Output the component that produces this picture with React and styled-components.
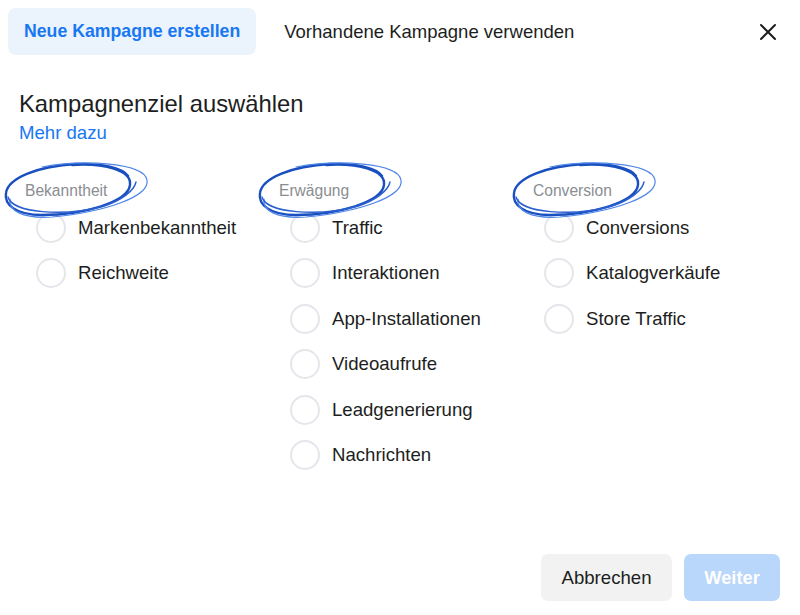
import React from 'react';
import styled, { createGlobalStyle } from 'styled-components';

const GlobalStyle = createGlobalStyle`
    html, body {
        margin: 0;
        padding: 0;
        background: #ffffff;
    }
    body {
        font-family: "Liberation Sans", Arial, sans-serif;
        color: #1c1e21;
    }
`;

const Dialog = styled.div`
    width: 800px;
    height: 615px;
    box-sizing: border-box;
    display: flex;
    flex-direction: column;
    background: #fff;
`;

const TopBar = styled.div`
    display: flex;
    align-items: center;
    padding: 8px 23px 0 8px;
    height: 47px;
`;

const Tab = styled.button`
    border: none;
    font-family: inherit;
    font-size: ${p => (p.$active ? '17.7px' : '18.5px')};
    height: 47px;
    padding: 0 16px;
    border-radius: 8px;
    cursor: pointer;
    font-weight: ${p => (p.$active ? 700 : 400)};
    color: ${p => (p.$active ? '#1877f2' : '#1c1e21')};
    background: ${p => (p.$active ? '#ebf3fc' : 'transparent')};
    margin-right: 12px;
`;

const CloseButton = styled.button`
    margin-left: auto;
    border: none;
    background: transparent;
    padding: 0;
    width: 18px;
    height: 18px;
    display: flex;
    align-items: center;
    justify-content: center;
    cursor: pointer;
`;

const Body = styled.div`
    flex: 1;
    padding: 35px 19px 0 19px;
`;

const Heading = styled.h2`
    margin: 0;
    font-size: 23.8px;
    font-weight: 400;
    line-height: 28px;
    color: #1c1e21;
`;

const LearnMore = styled.a`
    display: inline-block;
    margin-top: 4px;
    font-size: 18.6px;
    line-height: 22px;
    color: #1877f2;
    text-decoration: none;
`;

const Columns = styled.div`
    display: grid;
    grid-template-columns: 254px 254px 254px;
    margin-top: 37px;
`;

const Column = styled.div`
    display: flex;
    flex-direction: column;
`;

const GroupLabel = styled.div`
    position: relative;
    font-size: 15.6px;
    line-height: 20px;
    color: #8a8d91;
    padding-left: 6px;
    height: 20px;
`;

const Scribble = styled.svg`
    position: absolute;
    left: -17px;
    top: -22px;
    pointer-events: none;
`;

const Option = styled.label`
    display: flex;
    align-items: center;
    height: 45.5px;
    padding-left: 17px;
    font-size: 18.6px;
    color: #1c1e21;
    cursor: pointer;
    &:first-of-type {
        margin-top: 4px;
    }
`;

const Radio = styled.span`
    width: 30px;
    height: 30px;
    box-sizing: border-box;
    border-radius: 50%;
    border: 2px solid #e4e6eb;
    margin-right: 12px;
    flex-shrink: 0;
`;

const Footer = styled.div`
    display: flex;
    justify-content: flex-end;
    gap: 12px;
    padding: 0 20px 14px 0;
`;

const FooterButton = styled.button`
    border: none;
    font-family: inherit;
    height: 47px;
    border-radius: 7px;
    font-size: ${p => (p.$primary ? '18.3px' : '18.6px')};
    padding: 0 20px;
    min-width: ${p => (p.$primary ? '96px' : '131px')};
    font-weight: ${p => (p.$primary ? 700 : 400)};
    color: ${p => (p.$primary ? '#ffffff' : '#1c1e21')};
    background: ${p => (p.$primary ? '#b9d6fb' : '#f2f2f2')};
`;

const CircleMark = () => (
    <Scribble width="150" height="62" viewBox="0 0 150 62">
        <path
            d="M 70 6 C 102 4 130 11 128 26 C 126 43 82 56 40 56 C 13 56 2 45 4 34 C 6 19 36 7 74 5 C 100 4 121 9 126 17"
            fill="none"
            stroke="#1a4fc0"
            strokeWidth="2.4"
            strokeLinecap="round"
        />
        <path
            d="M 40 8 C 82 0 142 4 145 21 C 148 38 102 53 50 58 C 20 60 6 51 8 40"
            fill="none"
            stroke="#4f86e6"
            strokeWidth="1.2"
            strokeLinecap="round"
        />
        <path
            d="M 6 38 C 10 54 62 58 102 47 C 120 41 132 32 134 23"
            fill="none"
            stroke="#2a5fd0"
            strokeWidth="1.4"
            strokeLinecap="round"
        />
    </Scribble>
);

const groups = [
    { label: 'Bekanntheit', options: ['Markenbekanntheit', 'Reichweite'] },
    {
        label: 'Erwägung',
        options: ['Traffic', 'Interaktionen', 'App-Installationen', 'Videoaufrufe', 'Leadgenerierung', 'Nachrichten'],
    },
    { label: 'Conversion', options: ['Conversions', 'Katalogverkäufe', 'Store Traffic'] },
];

const App = () => {
    return (
        <>
            <GlobalStyle />
            <Dialog>
                <TopBar>
                    <Tab $active>Neue Kampagne erstellen</Tab>
                    <Tab>Vorhandene Kampagne verwenden</Tab>
                    <CloseButton aria-label="Schließen">
                        <svg width="18" height="18" viewBox="0 0 18 18">
                            <path d="M2 2 L16 16 M16 2 L2 16" stroke="#1c1e21" strokeWidth="2" strokeLinecap="round" />
                        </svg>
                    </CloseButton>
                </TopBar>

                <Body>
                    <Heading>Kampagnenziel auswählen</Heading>
                    <LearnMore href="#">Mehr dazu</LearnMore>

                    <Columns>
                        {groups.map(group => (
                            <Column key={group.label}>
                                <GroupLabel>
                                    <CircleMark />
                                    {group.label}
                                </GroupLabel>
                                {group.options.map(opt => (
                                    <Option key={opt}>
                                        <Radio />
                                        {opt}
                                    </Option>
                                ))}
                            </Column>
                        ))}
                    </Columns>
                </Body>

                <Footer>
                    <FooterButton>Abbrechen</FooterButton>
                    <FooterButton $primary>Weiter</FooterButton>
                </Footer>
            </Dialog>
        </>
    );
};

export default App;
